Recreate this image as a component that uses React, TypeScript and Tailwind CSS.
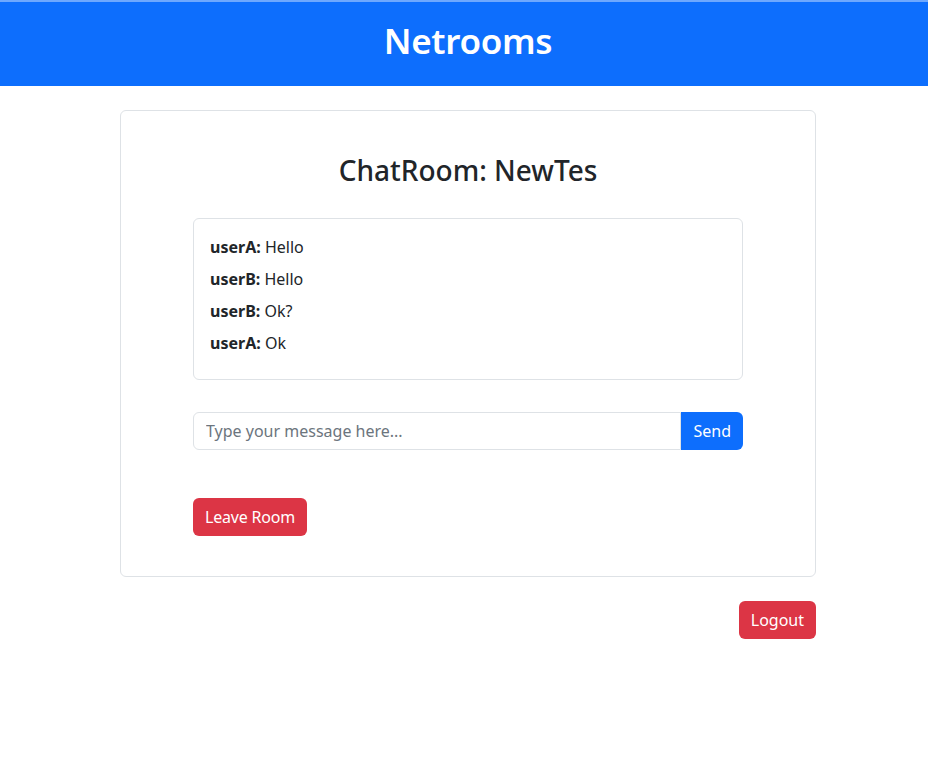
const messages = [
  { user: "userA", text: "Hello" },
  { user: "userB", text: "Hello" },
  { user: "userB", text: "Ok?" },
  { user: "userA", text: "Ok" },
];

const App = () => {
  return (
    <div
      className="min-h-[767px] bg-white text-[#212529]"
      style={{ fontFamily: '"Segoe UI", "Noto Sans", "Liberation Sans", sans-serif' }}
    >
      <div className="h-[2px] bg-[#6ea8fe]" />
      <header className="h-[84px] bg-[#0d6efd] flex items-center justify-center pl-2 pb-[8px]">
        <h1 className="text-white text-[35px] font-semibold leading-none tracking-[-0.3px]">Netrooms</h1>
      </header>

      <div className="flex justify-center pl-2 pt-6">
        <div className="w-[696px]">
          <div className="border border-[#dee2e6] rounded-[6px] px-[72px] pt-[42px] pb-[40px]">
            <h3 className="text-center text-[28px] font-medium leading-[34px] mb-[31px]">
              ChatRoom: NewTes
            </h3>

            <div className="border border-[#dee2e6] rounded-[6px] p-4">
              {messages.map((m, i) => (
                <p key={i} className="text-base leading-6 mb-2">
                  <strong className="font-bold">{m.user}:</strong> {m.text}
                </p>
              ))}
            </div>

            <div className="flex mt-8">
              <input
                type="text"
                placeholder="Type your message here..."
                className="flex-1 h-[38px] border border-[#dee2e6] rounded-l-[6px] px-3 text-base placeholder:text-[#6c757d] outline-none"
              />
              <button className="h-[38px] px-3 bg-[#0d6efd] text-white text-base rounded-r-[6px]">
                Send
              </button>
            </div>

            <div className="mt-12">
              <button className="h-[38px] px-3 bg-[#dc3545] text-white text-base rounded-[6px] tracking-[-0.2px]">
                Leave Room
              </button>
            </div>
          </div>

          <div className="flex justify-end mt-6">
            <button className="h-[38px] px-3 bg-[#dc3545] text-white text-base rounded-[6px]">
              Logout
            </button>
          </div>
        </div>
      </div>
    </div>
  );
};

export default App;
